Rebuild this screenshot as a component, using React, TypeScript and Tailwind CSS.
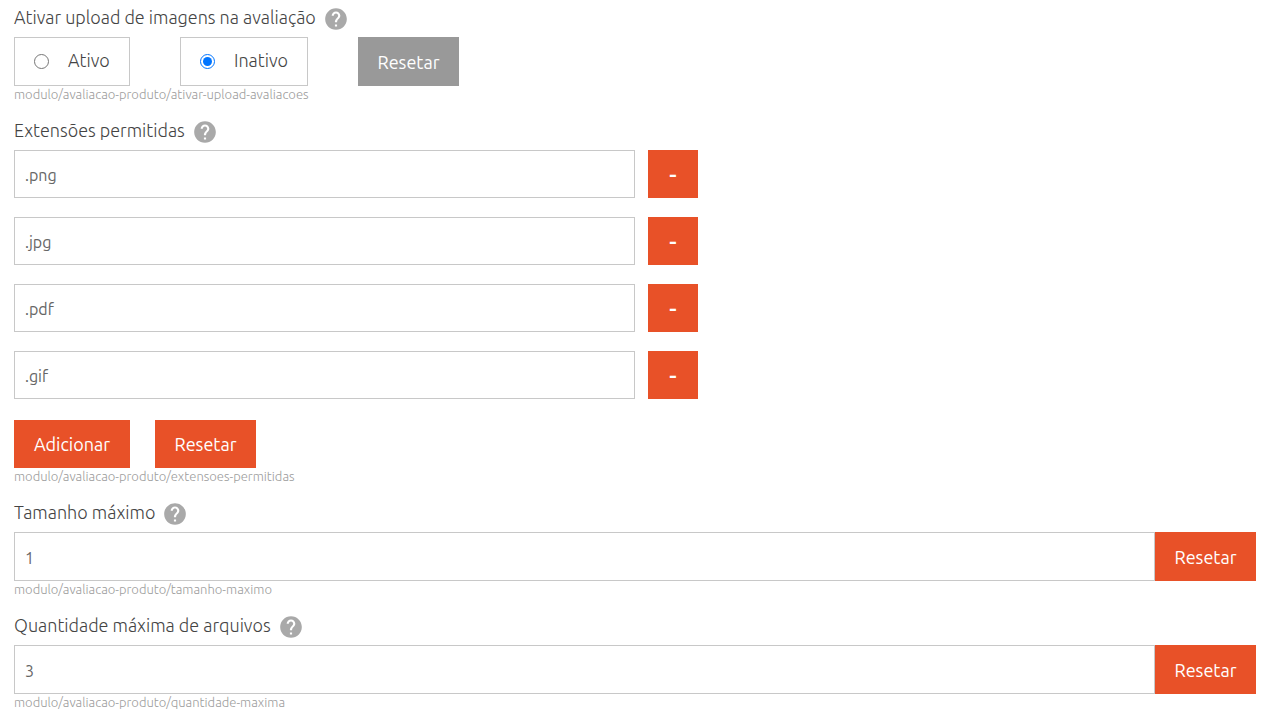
import { useState } from "react";
import type { ReactNode } from "react";
import { MdHelp } from "react-icons/md";

function Heading({ id, htmlFor, children }: { id?: string; htmlFor?: string; children: ReactNode }) {
  return (
    <div className="mb-[5px] flex h-[26px] items-center gap-[7px]">
      {htmlFor ? (
        <label id={id} htmlFor={htmlFor} className="pb-1 leading-[22px]">
          {children}
        </label>
      ) : (
        <span id={id} className="pb-1 leading-[22px]">
          {children}
        </span>
      )}
      <button type="button" aria-label="Ajuda" className="text-[#a9a9a9]">
        <MdHelp className="size-[26px]" />
      </button>
    </div>
  );
}

function Hint({ children }: { children: ReactNode }) {
  return <p className="text-[13px] leading-4 text-[#9c9c9c]">{children}</p>;
}

function TextSetting({ id, label, path, initial }: { id: string; label: string; path: string; initial: string }) {
  const [value, setValue] = useState(initial);
  return (
    <section>
      <Heading htmlFor={id}>{label}</Heading>
      <div className="flex h-[49px]">
        <input
          id={id}
          type="text"
          value={value}
          onChange={(e) => setValue(e.target.value)}
          className="min-w-0 flex-1 border border-[#c8c8c8] px-2.5 pt-0.5 text-[16px] font-normal text-[#666666] outline-none"
        />
        <button
          type="button"
          onClick={() => setValue(initial)}
          className="w-[101px] bg-[#e85128] pt-0.5 text-[18px] font-normal text-white"
        >
          Resetar
        </button>
      </div>
      <Hint>{path}</Hint>
    </section>
  );
}

const defaultExtensions = [".png", ".jpg", ".pdf", ".gif"];

export default function App() {
  const [upload, setUpload] = useState("inativo");
  const [extensions, setExtensions] = useState(defaultExtensions);

  return (
    <main className="flex flex-col gap-[17px] bg-white pt-1.5 pr-[13px] pl-3.5 font-['Ubuntu','Noto_Sans',sans-serif] text-[18px] font-light text-[#444444]">
      <section role="radiogroup" aria-labelledby="upload-label">
        <Heading id="upload-label">Ativar upload de imagens na avaliação</Heading>
        <div className="flex h-[49px] gap-[50px]">
          <label className="flex w-[116px] items-center gap-[19px] border border-[#c8c8c8] pl-[19px]">
            <input
              type="radio"
              name="upload"
              checked={upload === "ativo"}
              onChange={() => setUpload("ativo")}
              className="size-[15px]"
            />
            <span className="pb-0.5">Ativo</span>
          </label>
          <label className="flex w-[128px] items-center gap-[19px] border border-[#c8c8c8] pl-[19px]">
            <input
              type="radio"
              name="upload"
              checked={upload === "inativo"}
              onChange={() => setUpload("inativo")}
              className="size-[15px]"
            />
            <span className="pb-0.5">Inativo</span>
          </label>
          <button
            type="button"
            onClick={() => setUpload("inativo")}
            className="w-[101px] bg-[#999999] pt-0.5 text-[18px] font-normal text-white"
          >
            Resetar
          </button>
        </div>
        <Hint>modulo/avaliacao-produto/ativar-upload-avaliacoes</Hint>
      </section>

      <section role="group" aria-labelledby="extensions-label">
        <Heading id="extensions-label">Extensões permitidas</Heading>
        <ul className="mb-[21px] flex flex-col gap-[19px]">
          {extensions.map((extension, index) => (
            <li key={index} className="flex h-12 gap-[13px]">
              <input
                type="text"
                aria-label={`Extensão ${index + 1}`}
                value={extension}
                onChange={(e) => setExtensions(extensions.map((x, i) => (i === index ? e.target.value : x)))}
                className="w-1/2 border border-[#c8c8c8] px-2.5 pt-0.5 text-[16px] font-normal text-[#666666] outline-none"
              />
              <button
                type="button"
                aria-label={`Remover extensão ${index + 1}`}
                onClick={() => setExtensions(extensions.filter((_, i) => i !== index))}
                className="w-[50px] bg-[#e85128] pt-0.5 text-[24px] font-medium text-white"
              >
                -
              </button>
            </li>
          ))}
        </ul>
        <div className="flex h-12 gap-[25px]">
          <button
            type="button"
            onClick={() => setExtensions([...extensions, ""])}
            className="w-[116px] bg-[#e85128] text-[18px] font-normal text-white"
          >
            Adicionar
          </button>
          <button
            type="button"
            onClick={() => setExtensions(defaultExtensions)}
            className="w-[101px] bg-[#e85128] text-[18px] font-normal text-white"
          >
            Resetar
          </button>
        </div>
        <Hint>modulo/avaliacao-produto/extensoes-permitidas</Hint>
      </section>

      <TextSetting id="max-size" label="Tamanho máximo" path="modulo/avaliacao-produto/tamanho-maximo" initial="1" />
      <TextSetting
        id="max-files"
        label="Quantidade máxima de arquivos"
        path="modulo/avaliacao-produto/quantidade-maxima"
        initial="3"
      />
    </main>
  );
}
